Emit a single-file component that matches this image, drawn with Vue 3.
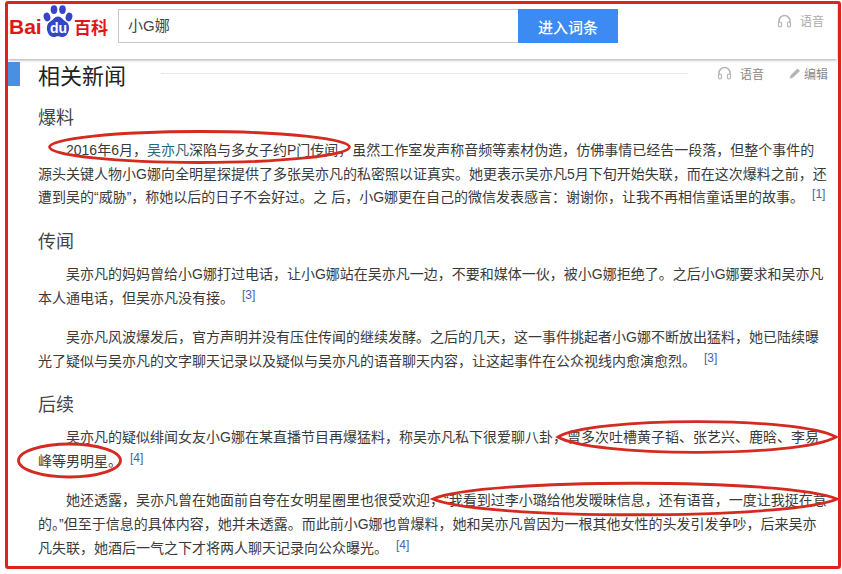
<script setup>
const sections = [
  {
    title: '爆料',
    paras: [
      {
        parts: [
          { text: '2016年6月，' },
          { text: '吴亦凡', link: true },
          { text: '深陷与多女子约P门传闻，虽然工作室发声称音频等素材伪造，仿佛事情已经告一段落，但整个事件的源头关键人物小G娜向全明星探提供了多张吴亦凡的私密照以证真实。她更表示吴亦凡5月下旬开始失联，而在这次爆料之前，还遭到吴的“威胁”，称她以后的日子不会好过。之 后，小G娜更在自己的微信发表感言：谢谢你，让我不再相信童话里的故事。' },
        ],
        ref: '[1]',
      },
    ],
  },
  {
    title: '传闻',
    paras: [
      {
        parts: [{ text: '吴亦凡的妈妈曾给小G娜打过电话，让小G娜站在吴亦凡一边，不要和媒体一伙，被小G娜拒绝了。之后小G娜要求和吴亦凡本人通电话，但吴亦凡没有接。' }],
        ref: '[3]',
      },
      {
        parts: [{ text: '吴亦凡风波爆发后，官方声明并没有压住传闻的继续发酵。之后的几天，这一事件挑起者小G娜不断放出猛料，她已陆续曝光了疑似与吴亦凡的文字聊天记录以及疑似与吴亦凡的语音聊天内容，让这起事件在公众视线内愈演愈烈。' }],
        ref: '[3]',
      },
    ],
  },
  {
    title: '后续',
    paras: [
      {
        parts: [{ text: '吴亦凡的疑似绯闻女友小G娜在某直播节目再爆猛料，称吴亦凡私下很爱聊八卦，曾多次吐槽黄子韬、张艺兴、鹿晗、李易峰等男明星。' }],
        ref: '[4]',
      },
      {
        parts: [{ text: '她还透露，吴亦凡曾在她面前自夸在女明星圈里也很受欢迎，“我看到过李小璐给他发暧昧信息，还有语音，一度让我挺在意的。”但至于信息的具体内容，她并未透露。而此前小G娜也曾爆料，她和吴亦凡曾因为一根其他女性的头发引发争吵，后来吴亦凡失联，她酒后一气之下才将两人聊天记录向公众曝光。' }],
        ref: '[4]',
      },
    ],
  },
]
</script>

<template>
  <div class="page">
    <header class="topbar">
      <div class="logo">
        <span class="logo-bai">Bai</span>
        <span class="logo-paw">
          <svg width="30" height="33" viewBox="0 0 30 33">
            <ellipse cx="4" cy="12" rx="3.3" ry="4.4" fill="#3445c8" transform="rotate(-15 4 12)" />
            <ellipse cx="11" cy="4.6" rx="3.3" ry="4.4" fill="#3445c8" />
            <ellipse cx="19.5" cy="4.6" rx="3.3" ry="4.4" fill="#3445c8" />
            <ellipse cx="26" cy="12" rx="3.3" ry="4.4" fill="#3445c8" transform="rotate(15 26 12)" />
            <path d="M15 11.5c3.5 0 4.800 3.500 8.500 5.500 4.500 3 3 14-3.500 15-2 .3-3.200-.7-5-.7s-3 1-5 .7c-6.500-1-8-12-3.500-15 3.700-2 5-5.500 8.500-5.500z" fill="#3445c8" />
          </svg>
          <span class="logo-du">du</span>
        </span>
        <span class="logo-bk">百科</span>
      </div>
      <div class="search">
        <div class="search-input">小G娜</div>
        <button class="search-btn">进入词条</button>
      </div>
      <div class="voice top-voice">
        <svg class="phones" width="15" height="14" viewBox="0 0 15 14">
          <path d="M2 9V7a5.500 5.500 0 0 1 11 0v2" fill="none" stroke="#b5b5b5" stroke-width="1.500" />
          <rect x="1.500" y="8" width="3" height="5" rx="1.400" fill="none" stroke="#b5b5b5" stroke-width="1.200" />
          <rect x="10.500" y="8" width="3" height="5" rx="1.400" fill="none" stroke="#b5b5b5" stroke-width="1.200" />
        </svg>
        <span>语音</span>
      </div>
    </header>

    <main class="content">
      <div class="news-head">
        <span class="marker"></span>
        <h2>相关新闻</h2>
        <span class="rule"></span>
        <div class="voice head-voice">
          <svg class="phones" width="15" height="14" viewBox="0 0 15 14">
            <path d="M2 9V7a5.500 5.500 0 0 1 11 0v2" fill="none" stroke="#b5b5b5" stroke-width="1.500" />
            <rect x="1.500" y="8" width="3" height="5" rx="1.400" fill="none" stroke="#b5b5b5" stroke-width="1.200" />
            <rect x="10.500" y="8" width="3" height="5" rx="1.400" fill="none" stroke="#b5b5b5" stroke-width="1.200" />
          </svg>
          <span>语音</span>
        </div>
        <div class="voice edit">
          <svg width="13" height="13" viewBox="0 0 13 13">
            <path d="M9.500 1.500l2.500 2.500-7 6.500-3.500 1.200 1.200-3.500z" fill="#b5b5b5" />
          </svg>
          <span>编辑</span>
        </div>
      </div>

      <section v-for="s in sections" :key="s.title" class="section">
        <h3>{{ s.title }}</h3>
        <p v-for="(p, i) in s.paras" :key="i" class="para">
          <template v-for="(part, j) in p.parts" :key="j">
            <span :class="{ link: part.link }">{{ part.text }}</span>
          </template>
          <sup class="ref">{{ p.ref }}</sup>
        </p>
      </section>
    </main>

    <svg class="marks" width="842" height="574" viewBox="0 0 842 574" fill="none" stroke="#d42a20" stroke-width="2.800">
      <ellipse cx="199.500" cy="147" rx="150" ry="15.500" />
      <path d="M558 437C590 417 800 416 836 437C800 458 590 457 558 437z" />
      <ellipse cx="69.500" cy="460.500" rx="51" ry="16.500" />
      <path d="M433 499C480 478 790 478 837 499C790 520 480 520 433 499z" />
    </svg>
  </div>
</template>

<style scoped>
.page {
  position: relative;
  width: 842px;
  height: 574px;
  box-sizing: border-box;
  padding: 4px 5px 7px 8px;
  overflow: hidden;
  background: #fff;
  font-family: "Liberation Sans", "Noto Sans CJK SC", sans-serif;
  color: #333;
}
.page::after {
  content: "";
  position: absolute;
  left: 5px;
  top: 1px;
  width: 836px;
  height: 568px;
  box-sizing: border-box;
  border: 3px solid #d8261f;
  border-radius: 3px;
  pointer-events: none;
}
.topbar {
  display: flex;
  align-items: flex-start;
  height: 55px;
  box-shadow: 0 1px 3px rgba(0, 0, 0, 0.35);
}
.logo {
  display: flex;
  align-items: flex-end;
  width: 110px;
  height: 33px;
  margin-top: 1px;
  padding-left: 1px;
  box-sizing: border-box;
  color: #e0161b;
}
.logo-bai {
  width: 34px;
  font-size: 21px;
  font-weight: 700;
  line-height: 22px;
  margin-bottom: 0;
}
.logo-paw {
  position: relative;
  width: 30px;
  height: 33px;
  margin-right: 1px;
}
.logo-du {
  position: absolute;
  left: 7px;
  top: 15px;
  font-size: 14px;
  line-height: 16px;
  font-weight: 700;
  color: #fff;
}
.logo-bk {
  font-size: 17px;
  line-height: 20px;
  font-weight: 700;
  margin-bottom: -1px;
}
.search {
  display: flex;
  margin: 5px 0 0 0;
}
.search-input {
  width: 400px;
  height: 34px;
  box-sizing: border-box;
  border: 1px solid #c8c8c8;
  border-right: 0;
  padding-left: 9px;
  font-size: 15px;
  line-height: 32px;
  color: #444;
}
.search-btn {
  width: 100px;
  height: 34px;
  border: 0;
  background: #3d8bf2;
  color: #fff;
  font-family: inherit;
  font-size: 15px;
  font-weight: 500;
}
.voice {
  display: flex;
  align-items: center;
  color: #888;
  font-size: 12px;
}
.phones {
  margin-right: 8px;
}
.top-voice {
  margin: 8px 0 0 159px;
  color: #aaa;
}
.news-head {
  display: flex;
  align-items: center;
  height: 32px;
}
.marker {
  width: 12px;
  height: 24px;
  margin-bottom: 2px;
  background: #4a90e2;
}
.news-head h2 {
  margin: 0 0 3px 18px;
  font-size: 22px;
  font-weight: 400;
  color: #222;
}
.rule {
  flex: 1;
  height: 1px;
  margin: 0 0 3px 35px;
  background: #e6e6e6;
}
.head-voice {
  margin: 0 0 4px 29px;
}
.edit {
  margin: 0 9px 4px 24px;
}
.edit svg {
  margin-right: 3px;
}
.section {
  margin-bottom: 20px;
}
.section:first-of-type h3 {
  margin-top: 15px;
}
.section h3 {
  margin: 0;
  padding-left: 30px;
  font-size: 18px;
  font-weight: 400;
  line-height: 24px;
  color: #444;
}
.para {
  margin: 9px 0 0;
  padding: 0 9px 0 30px;
  font-size: 14px;
  line-height: 23.7px;
  text-indent: 28px;
  color: #3a3a3a;
}
.para + .para {
  margin-top: 15.500px;
}
.link {
  color: #2c6478;
}
.ref {
  margin-left: 8px;
  font-size: 12px;
  line-height: 0;
  vertical-align: 4px;
  color: #4a5fa8;
}
.marks {
  position: absolute;
  left: 0;
  top: 0;
  pointer-events: none;
}
</style>
<style>
html, body { margin: 0; background: #fff; }
</style>
